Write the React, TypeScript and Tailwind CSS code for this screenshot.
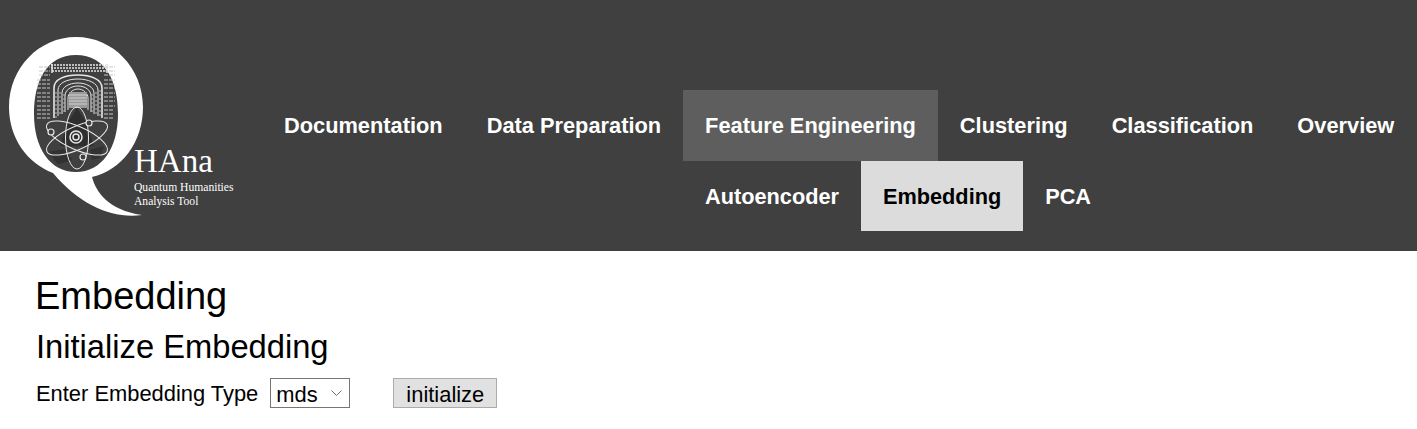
import React from "react";

const mainNav = ["Documentation", "Data Preparation", "Feature Engineering", "Clustering", "Classification", "Overview"];
const subNav = ["Autoencoder", "Embedding", "PCA"];

function Logo() {
    const shelves = [67, 71, 75, 80, 84, 88, 93, 97, 101, 106, 110, 114, 118];
    const arches = [
        "M54 118V88C54 79 65 75 78 75C90 75 102 79 102 88V118",
        "M58 116V90C58 83 67 79 78 79C88 79 98 83 98 90V116",
        "M62 114V93C62 87 69 83 78 83C86 83 94 87 94 93V114",
        "M65 112V96C65 90 71 86 78 86C85 86 91 90 91 96V112",
        "M68 110V98C68 93 73 89 78 89C83 89 88 93 88 98V110",
    ];
    return (
        <svg viewBox="0 0 262 251" className="w-[262px] h-[251px] shrink-0">
            <defs>
                <filter id="soft" x="0" y="0" width="1" height="1">
                    <feGaussianBlur stdDeviation="0.35" />
                </filter>
            </defs>
            <path
                fillRule="evenodd"
                fill="#fff"
                d="M76 37C113 37 143 68 143 107C143 142 122 170 92 177C96 192 108 210 142 215C112 219 80 205 53 173C27 163 9 138 9 107C9 68 39 37 76 37ZM76 55C46 55 34 82 34 114C34 148 50 172 76 172C102 172 118 148 118 114C118 82 106 55 76 55Z"
            />
            <g filter="url(#soft)">
                <g fill="none" stroke="#e6e6e6" strokeWidth="1">
                    <path d="M51 65H108M51 68H108M52 71H107" strokeWidth="1.5" strokeDasharray="2 1" />
                    <path d="M52 64V73M107 64V73" strokeWidth="1.5" />
                    {arches.map((d, i) => (
                        <path key={d} d={d} strokeWidth={i === 0 ? 1.6 : 1} />
                    ))}
                    <path d="M56 92V118M60 92V116M64 94V114M92 94V114M96 92V116M100 90V118" strokeDasharray="2 2" stroke="#b5b5b5" />
                    {shelves.map((y, i) => (
                        <path key={y} d={`M${37 + (i < 3 ? 2 : 0)} ${y}H50`} strokeDasharray="4 1" stroke="#c8c8c8" />
                    ))}
                    {shelves.map((y, i) => (
                        <path key={y} d={`M104 ${y}H${i < 10 ? 115 : 113}`} strokeDasharray="4 1" stroke="#c8c8c8" />
                    ))}
                </g>
                <rect x="69" y="92" width="18" height="16" fill="#9a9a9a" />
                <path d="M69 95H87M69 98H87M69 101H87M69 104H87" stroke="#d0d0d0" strokeWidth="1" />
                <path d="M68 122L77 108L86 122L94 146L60 146Z" fill="#2e2e2e" />
                <path d="M48 152L64 149L72 160L58 164ZM90 150L104 146L100 158L92 160Z" fill="#303030" />
            </g>
            <g fill="none" stroke="#e8e8e8" strokeWidth="1">
                <ellipse cx="77" cy="138" rx="11.5" ry="31" />
                <ellipse cx="77" cy="138" rx="11.5" ry="33" transform="rotate(66 77 138)" />
                <ellipse cx="77" cy="138" rx="11.5" ry="33" transform="rotate(-66 77 138)" />
                <circle cx="76" cy="137" r="6" strokeWidth="1.5" />
                <circle cx="76" cy="137" r="3" strokeWidth="1.5" />
            </g>
            <g fill="#404040" stroke="#e8e8e8" strokeWidth="1.2">
                <circle cx="51" cy="132" r="3" />
                <circle cx="89" cy="123" r="3" />
                <circle cx="83" cy="157" r="3" />
            </g>
            <g fill="#fff" fontFamily="'Liberation Serif', serif">
                <text x="134" y="172" fontSize="33">HAna</text>
                <text x="134" y="191" fontSize="11.6">Quantum Humanities</text>
                <text x="134" y="205" fontSize="11.6">Analysis Tool</text>
            </g>
        </svg>
    );
}

export default function App() {
    return (
        <div className="font-['Liberation_Sans',Arial,sans-serif] text-[21.9px] text-black bg-white min-h-[429px]">
            <header className="flex bg-[#404040] h-[251px]">
                <Logo />
                <nav className="pt-[90px] font-bold">
                    <div className="flex h-[71px] text-[21.8px]">
                        {mainNav.map((item) => (
                            <a
                                key={item}
                                href="#"
                                className={
                                    "flex items-center px-[22px] pt-[2px] text-white " +
                                    (item === "Feature Engineering" ? "bg-[#5e5e5e]" : "")
                                }
                            >
                                {item}
                            </a>
                        ))}
                    </div>
                    <div className="flex h-[70px] ml-[421px] text-[21.72px]">
                        {subNav.map((item) => (
                            <a
                                key={item}
                                href="#"
                                className={
                                    "flex items-center px-[22px] pt-[2px] " +
                                    (item === "Embedding" ? "bg-[#dcdcdc] text-black" : "text-white")
                                }
                            >
                                {item}
                            </a>
                        ))}
                    </div>
                </nav>
            </header>
            <main className="pl-[36px]">
                <h1 className="text-[38px] leading-[44px] mt-[23px] -ml-px">Embedding</h1>
                <h2 className="text-[32.7px] leading-[38px] mt-[10px]">Initialize Embedding</h2>
                <div className="flex items-center mt-[10px]">
                    <label htmlFor="embedding-type" className="pt-[2px]">Enter Embedding Type</label>
                    <div className="relative ml-[12px] w-[80px] h-[30px]">
                        <select
                            id="embedding-type"
                            defaultValue="mds"
                            className="appearance-none w-full h-full border border-[#767676] bg-white pl-[5px]"
                        >
                            <option value="mds">mds</option>
                        </select>
                        <svg viewBox="0 0 11 6" className="absolute left-[61px] top-[12px] w-[11px] h-[6px]">
                            <path d="M0.5 0.5L5.5 5.5L10.5 0.5" fill="none" stroke="#6b6b6b" strokeWidth="1" />
                        </svg>
                    </div>
                    <button className="ml-[43px] w-[104px] h-[30px] border border-[#ababab] bg-[#e1e1e1]">
                        initialize
                    </button>
                </div>
            </main>
        </div>
    );
}
